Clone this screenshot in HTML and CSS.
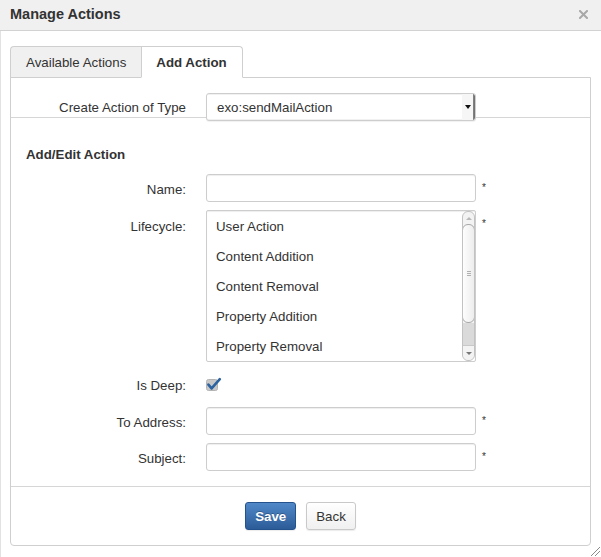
FILE: index.html
```html
<!DOCTYPE html>
<html>
<head>
<meta charset="utf-8">
<title>Manage Actions</title>
<link rel="stylesheet" href="styles.css">
</head>
<body>
<div class="dialog">
  <div class="dlg-header">
    <span class="title">Manage Actions</span>
    <svg class="close" width="9" height="9" viewBox="0 0 9 9"><path d="M1 1 L8 8 M8 1 L1 8" stroke="#a8a8a8" stroke-width="2" stroke-linecap="square"/></svg>
  </div>
  <div class="dlg-body">
    <div class="tabs">
      <div class="tab first">Available Actions</div>
      <div class="tab active">Add Action</div>
    </div>
    <div class="panel">
      <div class="type-row">
        <label class="lbl">Create Action of Type</label>
        <div class="select">
          <span class="select-text">exo:sendMailAction</span>
          <span class="caret-box"><span class="caret"></span></span>
        </div>
      </div>
      <div class="form">
        <h3 class="section-title">Add/Edit Action</h3>
        <div class="row">
          <label class="lbl">Name:</label>
          <div class="input"></div>
          <span class="req">*</span>
        </div>
        <div class="row row-top">
          <label class="lbl lbl-list">Lifecycle:</label>
          <div class="listbox">
            <div class="items">
              <div class="item">User Action</div>
              <div class="item">Content Addition</div>
              <div class="item">Content Removal</div>
              <div class="item">Property Addition</div>
              <div class="item">Property Removal</div>
            </div>
            <div class="sb">
              <div class="sb-up"><span class="tri-up"></span></div>
              <div class="sb-thumb"><span class="grip"></span></div>
              <div class="sb-track"></div>
              <div class="sb-down"><span class="tri-down"></span></div>
            </div>
          </div>
          <span class="req req-top">*</span>
        </div>
        <div class="row row-check">
          <label class="lbl">Is Deep:</label>
          <svg class="checkbox" width="16" height="16" viewBox="0 0 16 16">
            <rect x="0.5" y="2.5" width="11" height="11" rx="2" fill="#c8c8c8" stroke="#b4b4b4"/>
            <path d="M2.4 7.6 L5.6 11.4 L13.8 2.2" fill="none" stroke="#2d62a0" stroke-width="2.6" stroke-linecap="round" stroke-linejoin="round"/>
          </svg>
        </div>
        <div class="row">
          <label class="lbl">To Address:</label>
          <div class="input"></div>
          <span class="req">*</span>
        </div>
        <div class="row">
          <label class="lbl">Subject:</label>
          <div class="input"></div>
          <span class="req">*</span>
        </div>
      </div>
      <div class="actions">
        <button class="btn btn-primary">Save</button>
        <button class="btn">Back</button>
      </div>
    </div>
  </div>
  <svg class="grip-resize" width="11" height="11" viewBox="0 0 11 11"><path d="M1 10 L10 1 M5 10 L10 5" stroke="#8a8a8a" stroke-width="1"/></svg>
</div>
</body>
</html>
```
FILE: styles.css
```css
* { box-sizing: border-box; }
body {
  margin: 0;
  font-family: "Liberation Sans", Arial, sans-serif;
  font-size: 13.3px;
  color: #333;
  background: #fff;
}
.dialog {
  position: relative;
  width: 601px;
  height: 557px;
}
.dlg-header {
  height: 31px;
  background: #f0f0f0;
  border-bottom: 1px solid #d2d2d2;
  display: flex;
  align-items: center;
  justify-content: space-between;
  padding: 0 13px 2px 10px;
}
.title {
  font-weight: bold;
  font-size: 14.5px;
  color: #333;
}
.close { display: block; }
.dlg-body {
  border-left: 1px solid #e2e2e2;
  padding: 15px 10px 0 9px;
  height: 526px;
}
.tabs {
  display: flex;
  position: relative;
  z-index: 1;
  margin-bottom: -1px;
}
.tab {
  height: 32px;
  line-height: 31px;
  padding: 0 15px;
  border: 1px solid #cfcfcf;
  background: #f0f0f0;
  color: #333;
}
.tab.first {
  border-right: none;
  border-radius: 4px 0 0 0;
}
.tab.active {
  background: #fff;
  font-weight: bold;
  border-bottom-color: #fff;
  border-radius: 0 4px 0 0;
  padding: 0 15px 0 14px;
}
.panel {
  border: 1px solid #cfcfcf;
  border-radius: 0 0 4px 4px;
}
.type-row {
  display: flex;
  align-items: flex-start;
  height: 40px;
  padding-top: 15px;
  border-bottom: 1px solid #d6d6d6;
}
.lbl {
  flex: none;
  width: 195px;
  padding-right: 20px;
  text-align: right;
  color: #333;
}
.type-row .lbl { line-height: 29px; }
.select {
  position: relative;
  width: 270px;
  height: 28px;
  border: 1px solid #cdcdcd;
  border-radius: 3px;
  background: #fff;
  display: flex;
  align-items: center;
  box-shadow: inset -2px 0 1px rgba(0,0,0,0.55), 0 1px 1px rgba(0,0,0,0.06);
}
.select-text {
  flex: 1;
  padding-left: 10px;
  padding-top: 1px;
  color: #333;
}
.caret-box {
  width: 11px;
  height: 100%;
  margin-right: 2px;
  background: #f6f6f6;
  display: flex;
  align-items: center;
  justify-content: center;
}
.caret {
  width: 0;
  height: 0;
  border-left: 3px solid transparent;
  border-right: 3px solid transparent;
  border-top: 4px solid #111;
}
.form {
  display: flex;
  flex-direction: column;
  gap: 8px;
  padding: 28px 0 15px;
}
.section-title {
  margin: 0 0 2px;
  padding-left: 15px;
  font-size: 13.3px;
  line-height: 18px;
  font-weight: bold;
  color: #333;
}
.row {
  display: flex;
  align-items: center;
  height: 28px;
}
.row .lbl { padding-top: 2px; }
.row-top {
  align-items: flex-start;
  height: auto;
}
.row-check { height: 29px; }
.row .lbl-list {
  line-height: 30px;
  padding-top: 2px;
}
.input {
  width: 270px;
  height: 28px;
  border: 1px solid #cdcdcd;
  border-radius: 3px;
  background: #fff;
  box-shadow: inset 0 1px 1px rgba(0,0,0,0.07);
}
.req {
  margin-left: 6px;
  font-size: 10px;
  color: #333;
  line-height: 10px;
  margin-top: 0;
}
.req-top { margin-top: 9px; }
.listbox {
  width: 270px;
  height: 152px;
  border: 1px solid #cdcdcd;
  border-radius: 2px;
  background: #fff;
  display: flex;
  box-shadow: inset 0 1px 1px rgba(0,0,0,0.07);
}
.items { flex: 1; padding-top: 1px; }
.item {
  height: 30px;
  line-height: 30px;
  padding-left: 9px;
  color: #333;
}
.sb {
  width: 13px;
  height: 150px;
  border: 1px solid #c2c2c2;
  border-radius: 6px;
  background: #f3f3f3;
  display: flex;
  flex-direction: column;
  overflow: hidden;
}
.sb-up {
  height: 12px;
  display: flex;
  justify-content: center;
  align-items: center;
}
.sb-down {
  height: 15px;
  display: flex;
  justify-content: center;
  align-items: center;
  background: #f3f3f3;
  border-top: 1px solid #c8c8c8;
  border-radius: 0 0 6px 6px;
}
.tri-up {
  width: 0; height: 0;
  border-left: 3px solid transparent;
  border-right: 3px solid transparent;
  border-bottom: 3px solid #b8b8b8;
}
.tri-down {
  width: 0; height: 0;
  border-left: 3px solid transparent;
  border-right: 3px solid transparent;
  border-top: 3px solid #777;
}
.sb-thumb {
  height: 99px;
  margin: 0 -1px;
  border: 1px solid #a8a8a8;
  border-radius: 6px;
  background: linear-gradient(to right, #fdfdfd, #ededed);
  display: flex;
  align-items: center;
  justify-content: center;
}
.grip {
  width: 4px;
  height: 5px;
  border-top: 1px solid #b0b0b0;
  border-bottom: 1px solid #b0b0b0;
  position: relative;
}
.grip::after {
  content: "";
  position: absolute;
  left: 0;
  right: 0;
  top: 1px;
  border-top: 1px solid #b0b0b0;
}
.sb-track {
  flex: 1;
  background: #dadada;
  margin: 0 -1px;
  border-left: 1px solid #c8c8c8;
  border-right: 1px solid #c8c8c8;
}
.checkbox { display: block; }
.actions {
  border-top: 1px solid #d6d6d6;
  padding: 15px 0 15px;
  display: flex;
  justify-content: center;
  gap: 10px;
}
.btn {
  height: 28px;
  padding: 0 9px;
  font-family: "Liberation Sans", Arial, sans-serif;
  font-size: 13.3px;
  color: #333;
  border: 1px solid #c9c9c9;
  border-radius: 3px;
  background: linear-gradient(#ffffff, #f0f0f0);
  box-shadow: 0 1px 1px rgba(0,0,0,0.08);
}
.btn-primary {
  font-weight: bold;
  color: #fff;
  border-color: #24528c;
  background: linear-gradient(#5088c8, #2c5c98);
  text-shadow: 0 -1px 0 rgba(0,0,0,0.25);
  padding: 0 9px;
}
.grip-resize {
  position: absolute;
  right: 0;
  bottom: 0;
}
```
